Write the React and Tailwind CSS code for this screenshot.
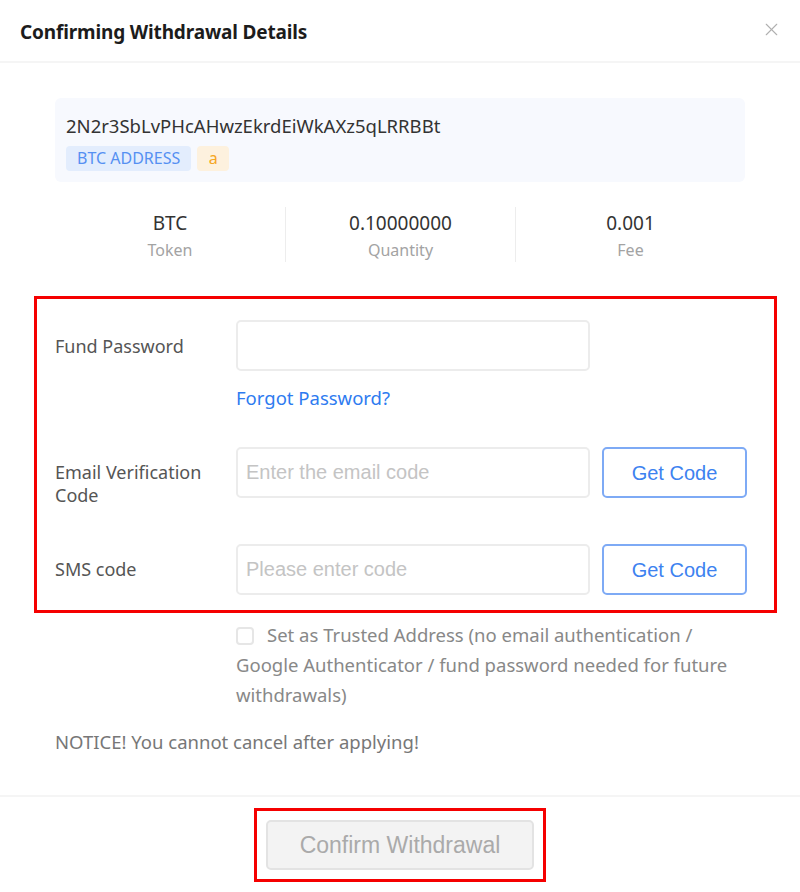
import { X } from "lucide-react";

const sans = "font-['Noto_Sans',sans-serif]";
const arial = "font-['Liberation_Sans',Arial,sans-serif]";

const stats = [
    { value: "BTC", label: "Token" },
    { value: "0.10000000", label: "Quantity" },
    { value: "0.001", label: "Fee" },
];

function CodeButton() {
    return (
        <button
            className={`${arial} w-[145px] h-[51px] shrink-0 rounded-[5px] border-2 border-[#7eaaf5] text-[20px] text-[#3d82f0] bg-white`}
        >
            Get Code
        </button>
    );
}

function Field({ placeholder }) {
    return (
        <input
            placeholder={placeholder}
            className={`${arial} w-[354px] h-[51px] shrink-0 rounded-[5px] border-2 border-[#ececec] px-2 text-[20px] text-[#333] placeholder:text-[#c4c4c4] outline-none`}
        />
    );
}

export default function App() {
    return (
        <div className={`${sans} w-[800px] h-[892px] bg-white flex flex-col`}>
            <div className="h-[63px] shrink-0 flex items-center justify-between pl-5 pr-[18px] pt-[4px] border-b-2 border-[#f5f5f5]">
                <h1 className="text-[19px] font-bold text-[#1c1c1c] tracking-[-0.15px]">
                    Confirming Withdrawal Details
                </h1>
                <X className="w-[21px] h-[21px] text-[#b0b0b0] -mt-[7px]" strokeWidth={1.3} />
            </div>

            <div className="px-[55px] pt-[35px]">
                <div className="h-[84px] rounded-md bg-[#f7f9fe] px-[11px] pt-[16px]">
                    <p className="text-[18.5px] leading-[24px] text-[#333]">
                        2N2r3SbLvPHcAHwzEkrdEiWkAXz5qLRRBBt
                    </p>
                    <div className="mt-[8px] flex gap-[6px]">
                        <span className="h-[25px] px-[11px] rounded bg-[#e3edfd] text-[16px] leading-[25px] text-[#5590f2]">
                            BTC ADDRESS
                        </span>
                        <span className="h-[25px] w-[32px] rounded bg-[#fdf1de] text-[16px] leading-[24px] text-center text-[#f5a623]">
                            a
                        </span>
                    </div>
                </div>

                <div className="mt-[25px] grid grid-cols-3 h-[55px]">
                    {stats.map((s, i) => (
                        <div
                            key={s.label}
                            className={`flex flex-col items-center ${i > 0 ? "border-l border-[#ededed]" : ""}`}
                        >
                            <span className="text-[19px] leading-[24px] text-[#333] mt-[4px]">{s.value}</span>
                            <span className="text-[16px] leading-[22px] text-[#a3a3a3] mt-[4px]">{s.label}</span>
                        </div>
                    ))}
                </div>
            </div>

            {/* form rows, boxed in red */}
            <div className="ml-[34px] mt-[34px] w-[743px] h-[317px] border-[3px] border-[#f50000] pl-[18px] pt-[21px]">
                <div className="flex">
                    <label className="w-[181px] text-[18px] leading-[24px] text-[#555] pt-[14px]">Fund Password</label>
                    <Field placeholder="" />
                </div>
                <div className="ml-[181px] mt-[15px] text-[18.5px] leading-[24px] text-[#2e7bf0]">
                    Forgot Password?
                </div>
                <div className="flex items-start mt-[37px] gap-[12px]">
                    <label className="w-[169px] h-[51px] text-[18px] leading-[23px] text-[#555] pt-[14px]">
                        Email Verification Code
                    </label>
                    <Field placeholder="Enter the email code" />
                    <CodeButton />
                </div>
                <div className="flex items-center mt-[46px] gap-[12px]">
                    <label className="w-[169px] text-[18px] text-[#555]">SMS code</label>
                    <Field placeholder="Please enter code" />
                    <CodeButton />
                </div>
            </div>

            <div className="pl-[236px] pr-[55px] mt-[7px] text-[18.5px] leading-[30px] text-[#888]">
                <span className="inline-block align-[-3px] w-[18px] h-[18px] mr-[13px] rounded-[4px] border-2 border-[#e6e6e6]" />
                Set as Trusted Address (no email authentication / Google Authenticator / fund password needed for future withdrawals)
            </div>

            <p className="pl-[55px] mt-[20px] text-[18.5px] leading-[24px] text-[#777]">
                NOTICE! You cannot cancel after applying!
            </p>

            <div className="mt-[41px] border-t-2 border-[#f5f5f5] flex justify-center pt-[11px]">
                <div className="border-[3px] border-[#f50000] p-[9px]">
                    <button
                        className={`${arial} w-[268px] h-[50px] rounded-[5px] border-2 border-[#e3e3e3] bg-[#f3f3f3] text-[23px] text-[#aaa]`}
                    >
                        Confirm Withdrawal
                    </button>
                </div>
            </div>
        </div>
    );
}
